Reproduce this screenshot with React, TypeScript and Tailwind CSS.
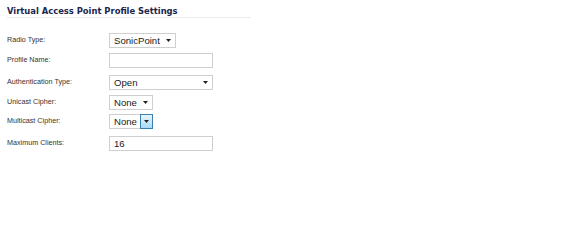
import React from 'react';

const labelCls = "w-[102px] shrink-0 text-[7.2px] text-[#333] font-['Liberation_Sans',Arial,sans-serif]";
const boxCls = "h-[15px] bg-white border border-[#cfcfcf] flex items-center text-[9.6px] text-[#1a1a1a] font-['Liberation_Sans',Arial,sans-serif]";

const Arrow = () => (
  <svg width="5" height="3" viewBox="0 0 5 3" className="shrink-0">
    <path d="M0 0h5L2.5 3z" fill="#222" />
  </svg>
);

const Select = ({ value, width, hot }: { value: string; width: string; hot?: boolean }) => (
  <div className={`${boxCls} ${width} pl-[4px] justify-between`}>
    <span className="leading-none">{value}</span>
    {hot ? (
      <span className="h-[15px] w-[13px] -mr-px border border-[#3c7fb1] bg-gradient-to-b from-[#eaf6fd] to-[#a7d9f5] flex items-center justify-center">
        <Arrow />
      </span>
    ) : (
      <span className="pr-[4px] flex items-center">
        <Arrow />
      </span>
    )}
  </div>
);

const Row = ({ label, mt, children }: { label: string; mt: string; children: React.ReactNode }) => (
  <div className={`flex items-center ${mt}`}>
    <div className={labelCls}>{label}</div>
    {children}
  </div>
);

export default function App() {
  return (
    <div className="w-[576px] h-[202px] bg-white pl-[7px] pt-[6px]">
      <div className="w-[244px] border-b border-[#ebebeb] pb-[1px]">
        <div className="text-[8.4px] font-bold text-[#1b2550] leading-[10px] font-['DejaVu_Sans',Verdana,sans-serif]">
          Virtual Access Point Profile Settings
        </div>
      </div>
      <Row label="Radio Type:" mt="mt-[15px]">
        <Select value="SonicPoint" width="w-[67px]" />
      </Row>
      <Row label="Profile Name:" mt="mt-[5px]">
        <div className={`${boxCls} w-[104px]`} />
      </Row>
      <Row label="Authentication Type:" mt="mt-[7px]">
        <Select value="Open" width="w-[104px]" />
      </Row>
      <Row label="Unicast Cipher:" mt="mt-[5px]">
        <Select value="None" width="w-[44px]" />
      </Row>
      <Row label="Multicast Cipher:" mt="mt-[4px]">
        <Select value="None" width="w-[44px]" hot />
      </Row>
      <Row label="Maximum Clients:" mt="mt-[7px]">
        <div className={`${boxCls} w-[104px] pl-[4px]`}>
          <span className="leading-none">16</span>
        </div>
      </Row>
    </div>
  );
}
